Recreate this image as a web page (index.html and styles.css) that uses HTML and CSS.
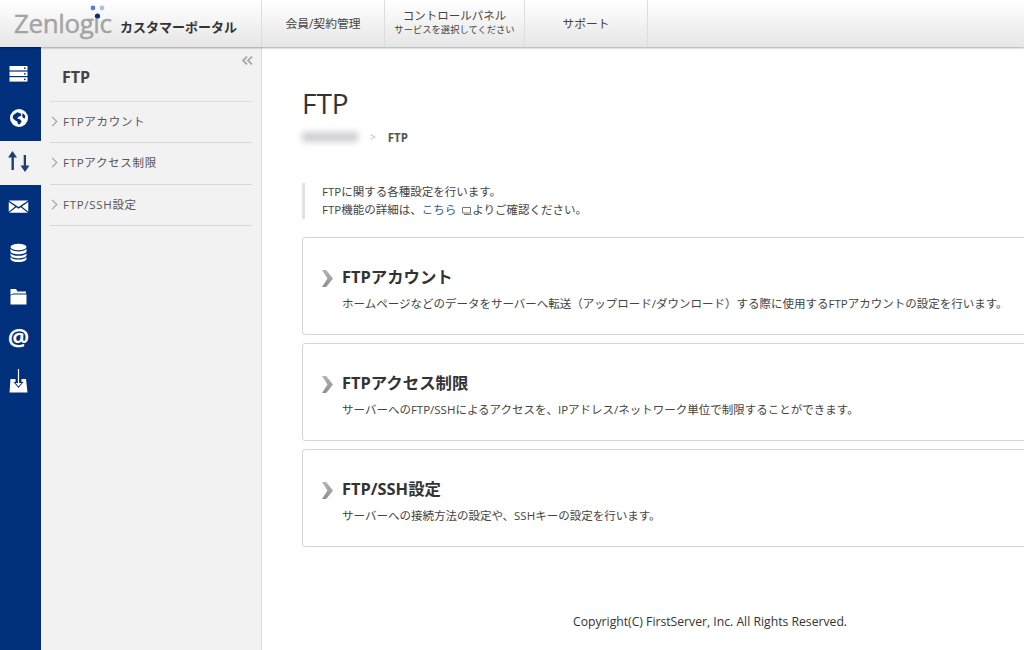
FILE: index.html
```html
<!DOCTYPE html>
<html lang="ja">
<head>
<meta charset="utf-8">
<title>FTP</title>
<link rel="stylesheet" href="styles.css">
</head>
<body>
<header class="topbar">
  <div class="brand">
    <div class="logo">
      <span class="logo-text">Zenlogic</span>
      <svg class="logo-dots" width="16" height="16" viewBox="0 0 16 16"><circle cx="3" cy="3" r="2.4" fill="#5b82c8"/><circle cx="12" cy="3" r="2.4" fill="#a9c1e6"/><circle cx="7.5" cy="11" r="2.6" fill="#0f2f6e"/></svg>
    </div>
    <span class="portal">カスタマーポータル</span>
  </div>
  <nav class="topnav">
    <a class="topnav-item t1">会員/契約管理</a>
    <a class="topnav-item t2"><span>コントロールパネル</span><small>サービスを選択してください</small></a>
    <a class="topnav-item t3">サポート</a>
  </nav>
</header>
<div class="body-row">
  <aside class="rail">
    <div class="rail-item i-server">
      <svg width="19" height="16" viewBox="0 0 19 16"><g fill="#fff"><rect x="0.5" y="0" width="18" height="4.4"/><rect x="0.5" y="5.6" width="18" height="4.4"/><rect x="0.5" y="11.2" width="18" height="4.4"/></g><g fill="#00307a"><rect x="15" y="1.5" width="1.6" height="1.4"/><rect x="15" y="7.1" width="1.6" height="1.4"/><rect x="15" y="12.7" width="1.6" height="1.4"/></g></svg>
    </div>
    <div class="rail-item i-globe">
      <svg width="18" height="18" viewBox="0 0 20 20"><circle cx="10" cy="10" r="10" fill="#fff"/><path d="M3.5 7 8 3.5 12 5 12.5 7.5 9.5 8.5 8 10.5 11 11.5 13 13.5 11 17 9 17 8 14 5.5 12.5 3 10Z" fill="#00307a"/><path d="M14 4.5 16.5 7 17 10.5 14.5 10 13.5 7.5Z" fill="#00307a"/></svg>
    </div>
    <div class="rail-item active i-arrows">
      <svg width="22" height="21" viewBox="0 0 22 21"><path d="M4.5 0 9 6.5H5.9V19H3.5V6.5H0Z" fill="#1c3f77"/><path d="M17 21 12.5 14.5H15.7V4H18V14.5H21.5Z" fill="#1c3f77"/></svg>
    </div>
    <div class="rail-item i-mail">
      <svg width="21" height="13" viewBox="0 0 22 14"><path d="M0.5 0.5H21.5L11 7.6Z" fill="#fff"/><path d="M0.5 2.2 7.4 7 0.5 12.6ZM21.5 2.2 14.6 7 21.5 12.6Z" fill="#fff"/><path d="M8.6 7.9 11 9.5 13.4 7.9 21 13.6H1Z" fill="#fff"/></svg>
    </div>
    <div class="rail-item i-db">
      <svg width="17" height="20" viewBox="0 0 18 20"><ellipse cx="9" cy="3.6" rx="8.5" ry="3.4" fill="#fff"/><path d="M.5 5.6C2 7.6 5.4 8.4 9 8.4S16 7.6 17.500 5.600V8.200C17.500 10 13.400 11.400 9 11.400S.5 10 .5 8.200Z" fill="#fff"/><path d="M.5 10.200C2 12.200 5.400 13 9 13S16 12.200 17.500 10.200V12.400C17.500 14.200 13.400 15.600 9 15.600S.5 14.200 .5 12.400Z" fill="#fff"/><path d="M.5 14.200C2 16.200 5.400 17 9 17S16 16.200 17.500 14.200V16C17.500 18 13.400 19.600 9 19.600S.5 18 .5 16Z" fill="#fff"/></svg>
    </div>
    <div class="rail-item i-folder">
      <svg width="17" height="17" viewBox="0 0 17 17"><path d="M.5 1H6L7.500 3.500H16V5.500H3L.5 7Z" fill="#fff"/><path d="M.5 7.500 3 6.500H16.500V16.500H.5Z" fill="#fff"/></svg>
    </div>
    <div class="rail-item at">@</div>
    <div class="rail-item i-down">
      <svg width="19" height="24" viewBox="0 0 19 24"><path d="M1.500 10H6.500V13H4.500L9.500 19 14.500 13H12.500V10H17L18.500 23.500H.5Z" fill="#fff"/><path d="M8.900 0H10.100V14H12.500L9.500 17.500 6.500 14H8.900Z" fill="#fff"/></svg>
    </div>
  </aside>
  <aside class="subnav">
    <div class="collapse">
      <svg width="11" height="9" viewBox="0 0 11 9"><path d="M5 .5 1 4.500 5 8.500M10 .5 6 4.500 10 8.500" fill="none" stroke="#aaa" stroke-width="1.800"/></svg>
    </div>
    <div class="subnav-title">FTP</div>
    <ul class="subnav-list">
      <li class="subnav-item">FTPアカウント</li>
      <li class="subnav-item">FTPアクセス制限</li>
      <li class="subnav-item">FTP/SSH設定</li>
    </ul>
  </aside>
  <main class="content">
    <h1 class="page-title">FTP</h1>
    <div class="crumbs"><span class="blur"></span><span class="sep">&gt;</span><span class="current">FTP</span></div>
    <div class="intro">
      <p>FTPに関する各種設定を行います。</p>
      <p>FTP機能の詳細は、<a class="link">こちら</a><svg class="ext" width="10" height="8" viewBox="0 0 10 8"><path d="M.5.5H8.500V6H.5ZM2 7.500H9.500" fill="none" stroke="#777" stroke-width="1"/></svg>よりご確認ください。</p>
    </div>
    <section class="card">
      <h2 class="card-title">FTPアカウント</h2>
      <p class="card-text">ホームページなどのデータをサーバーへ転送（アップロード/ダウンロード）する際に使用するFTPアカウントの設定を行います。</p>
    </section>
    <section class="card">
      <h2 class="card-title">FTPアクセス制限</h2>
      <p class="card-text">サーバーへのFTP/SSHによるアクセスを、IPアドレス/ネットワーク単位で制限することができます。</p>
    </section>
    <section class="card">
      <h2 class="card-title">FTP/SSH設定</h2>
      <p class="card-text">サーバーへの接続方法の設定や、SSHキーの設定を行います。</p>
    </section>
    <footer class="copyright">Copyright(C) FirstServer, Inc. All Rights Reserved.</footer>
  </main>
</div>
</body>
</html>
```

FILE: styles.css
```css
* { box-sizing: border-box; }
html, body { margin: 0; padding: 0; height: 100%; overflow: hidden; }
body {
  width: 1024px;
  height: 650px;
  font-family: "Open Sans", "Noto Sans CJK JP", sans-serif;
  color: #333;
  background: #fff;
  display: flex;
  flex-direction: column;
}
.topbar {
  height: 47px;
  flex: none;
  display: flex;
  background: linear-gradient(#fff, #e6e6e6);
  box-shadow: 0 1px 2px rgba(0,0,0,.35);
  position: relative;
  z-index: 2;
}
.brand {
  width: 262px;
  flex: none;
  display: flex;
  align-items: flex-start;
  border-right: 1px solid #ddd;
  padding-left: 14px;
}
.logo { position: relative; width: 106px; height: 47px; }
.logo-text {
  position: absolute;
  left: 0;
  top: 5px;
  font-family: "Open Sans", sans-serif;
  font-size: 26px;
  line-height: 36px;
  letter-spacing: -0.4px;
  color: #a3a3a3;
  font-weight: 400;
  -webkit-text-stroke: .4px #a3a3a3;
}
.logo-dots { position: absolute; left: 76px; top: 5px; }
.portal {
  font-size: 13px;
  font-weight: 700;
  color: #333;
  line-height: 18px;
  margin-top: 18px;
  white-space: nowrap;
}
.topnav { display: flex; height: 47px; }
.topnav-item {
  display: flex;
  flex-direction: column;
  align-items: center;
  justify-content: center;
  border-right: 1px solid #ddd;
  font-size: 11.8px;
  color: #444;
  white-space: nowrap;
  padding-bottom: 2px;
}
.topnav-item small { font-size: 9.3px; line-height: 14px; color: #444; }
.topnav-item span { line-height: 15px; font-size: 11.5px; }
.t1 { width: 123px; }
.t2 { width: 140px; }
.t3 { width: 123px; }
.body-row { flex: 1; display: flex; min-height: 0; }
.rail {
  width: 41px;
  flex: none;
  background: #002f7c;
  display: flex;
  flex-direction: column;
  padding-top: 6px;
}
.rail-item {
  height: 44px;
  flex: none;
  display: flex;
  align-items: center;
  justify-content: center;
  padding-right: 4px;
  color: #fff;
}
.rail-item.active { background: #f3f2f3; }
.i-server svg, .i-globe svg { margin-bottom: 2px; }
.i-arrows svg { margin-bottom: 3px; }
.i-mail svg { margin-bottom: 1px; }
.i-db svg { margin-top: 4px; }
.i-folder svg { margin-top: 3px; }
.i-down svg { margin-bottom: 4px; }
.rail-item.at {
  font-family: "Open Sans", sans-serif;
  font-weight: 700;
  font-size: 24px;
  line-height: 1;
  padding-bottom: 4px;
}
.subnav {
  width: 221px;
  flex: none;
  background: #f3f2f3;
  border-right: 1px solid #ddd;
  padding: 0 9px;
  position: relative;
}
.collapse { position: absolute; right: 8px; top: 9px; line-height: 0; }
.subnav-title {
  height: 55px;
  padding: 18px 0 0 12px;
  font-size: 16px;
  font-weight: 700;
  line-height: 24px;
  color: #444;
  border-bottom: 1px solid #ddd;
}
.subnav-list { list-style: none; margin: 0; padding: 0; }
.subnav-item {
  height: 41.33px;
  line-height: 40px;
  padding-left: 13px;
  font-size: 11.5px;
  letter-spacing: .7px;
  color: #555;
  border-bottom: 1px solid #d8d8d8;
  position: relative;
}
.subnav-item::before {
  content: "";
  position: absolute;
  left: -1px;
  top: 16px;
  width: 6px;
  height: 6px;
  border-top: 1.5px solid #999;
  border-right: 1.5px solid #999;
  transform: rotate(45deg);
}
.content { flex: 1; min-width: 0; padding: 38px 0 0 40px; position: relative; }
.page-title {
  margin: 0;
  font-size: 28px;
  font-weight: 400;
  line-height: 36px;
  color: #333;
}
.crumbs {
  display: flex;
  align-items: center;
  height: 20px;
  margin-top: 6px;
  font-size: 11.5px;
  font-weight: 700;
  color: #555;
}
.blur {
  width: 56px;
  height: 10px;
  background: #cfcfd1;
  filter: blur(3px);
}
.sep { margin: 0 12px; color: #bbb; font-weight: 400; font-size: 10px; }
.intro {
  margin-top: 36px;
  border-left: 3px solid #e2e2e2;
  padding-left: 17px;
  height: 36px;
  font-size: 11.5px;
  line-height: 18px;
  color: #444;
}
.intro p { margin: 0; white-space: nowrap; }
.link { color: #2b5a94; margin: 0 6px 0 0; }
.ext { vertical-align: -1px; }
.card {
  width: 760px;
  height: 98px;
  margin-top: 8px;
  border: 1px solid #d5d5d5;
  border-radius: 3px;
  padding: 27px 0 0 39px;
  position: relative;
}
.intro + .card { margin-top: 18px; }
.card::after {
  content: "";
  position: absolute;
  left: 19px;
  top: 32px;
  width: 11px;
  height: 17px;
  background: linear-gradient(#b5b5b5, #8e8e8e);
  clip-path: polygon(0 0, 38% 0, 100% 50%, 38% 100%, 0 100%, 50% 50%);
}
.card-title {
  margin: 0;
  font-size: 16.4px;
  font-weight: 700;
  line-height: 24px;
  color: #333;
}
.card-text {
  margin: 7px 0 0;
  font-size: 11.5px;
  line-height: 16px;
  color: #444;
  white-space: nowrap;
}
.copyright {
  position: absolute;
  left: 311px;
  top: 566px;
  font-size: 12.2px;
  color: #333;
  white-space: nowrap;
}
```
